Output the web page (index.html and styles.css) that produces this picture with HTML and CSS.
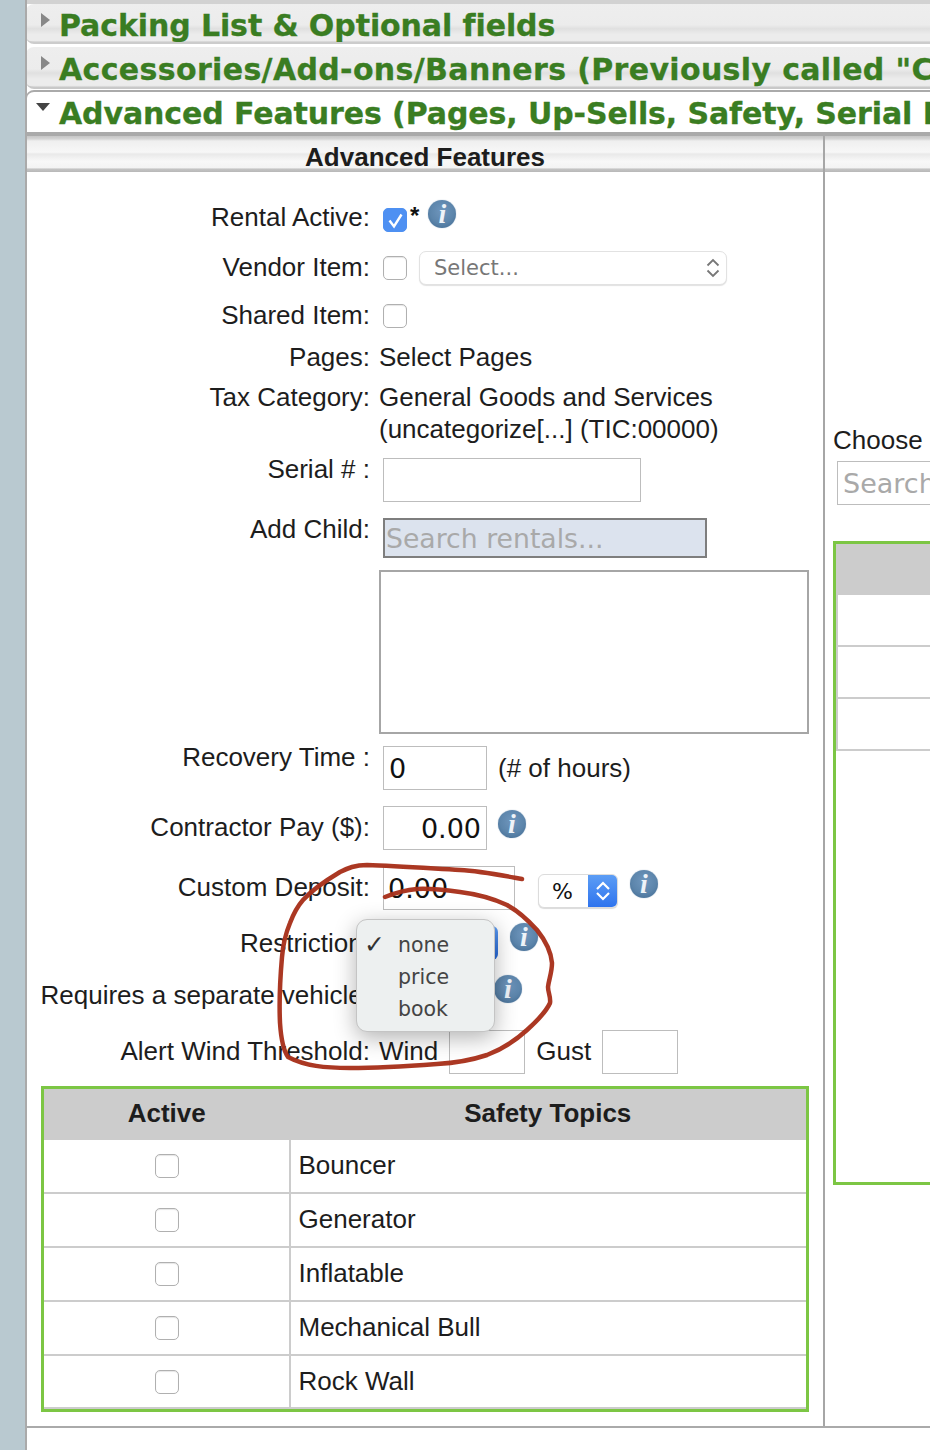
FILE: index.html
```html
<!DOCTYPE html>
<html lang="en">
<head>
<meta charset="utf-8">
<title>Advanced Features</title>
<link rel="stylesheet" href="styles.css">
</head>
<body>
<aside class="rail"></aside>
<main class="main">
  <div class="sliver"></div>
  <div class="acc closed"><span class="tri-r"></span><h3 class="acc-title">Packing List &amp; Optional fields</h3></div>
  <div class="acc closed second"><span class="tri-r"></span><h3 class="acc-title">Accessories/Add-ons/Banners (Previously called "Customizations")</h3></div>
  <div class="acc open"><span class="tri-d"></span><h3 class="acc-title">Advanced Features (Pages, Up-Sells, Safety, Serial Numbers)</h3></div>

  <div class="panel">
    <section class="col-left">
      <div class="subhead">Advanced Features</div>
      <div class="form">
        <div class="row h50"><label class="lab">Rental Active:</label><div class="val">
          <span class="cb checked m6"><svg viewBox="0 0 24 24" width="24" height="24"><path d="M6.500 12.500l4.500 6 7.500-12" fill="none" stroke="#fff" stroke-width="2.400"/></svg></span>
          <span class="star">*</span><span class="info info-rental">i</span></div></div>
        <div class="row h48"><label class="lab">Vendor Item:</label><div class="val">
          <span class="cb m4"></span>
          <div class="select-soft"><span>Select...</span><svg width="16" height="24" viewBox="0 0 16 24"><path d="M2.500 9.500L8 4l5.500 5.500M2.500 14.500L8 20l5.500-5.500" fill="none" stroke="#777" stroke-width="1.800"/></svg></div></div></div>
        <div class="row h42"><label class="lab">Shared Item:</label><div class="val"><span class="cb m4"></span></div></div>
        <div class="row h40"><label class="lab">Pages:</label><div class="val text">Select Pages</div></div>
        <div class="row h72"><label class="lab">Tax Category:</label><div class="val text tax">General Goods and Services<br>(uncategorize[...] (TIC:00000)</div></div>
        <div class="row h60"><label class="lab">Serial # :</label><div class="val"><span class="inp w258 m4"></span></div></div>
        <div class="row h228"><label class="lab">Add Child:</label><div class="val stack">
          <span class="search-blue">Search rentals...</span>
          <div class="listbox"></div></div></div>
        <div class="row h70"><label class="lab">Recovery Time :</label><div class="val"><span class="inp w104 m4 left">0</span><span class="hint">(# of hours)</span></div></div>
        <div class="row h60"><label class="lab">Contractor Pay ($):</label><div class="val"><span class="inp w104 up6 right">0.00</span><span class="info info-pay">i</span></div></div>
        <div class="row h56"><label class="lab">Custom Deposit:</label><div class="val"><span class="inp w132 up6 dep">0.00</span>
          <div class="select-blue"><span class="sb-text">%</span><span class="sb-btn"><svg width="18" height="26" viewBox="0 0 18 26"><path d="M3 11l6-6 6 6M3 15l6 6 6-6" fill="none" stroke="#fff" stroke-width="2.200"/></svg></span></div>
          <span class="info info-dep">i</span></div></div>
        <div class="row h52"><label class="lab">Restriction:</label><div class="val"><span class="hidden-select"></span><span class="info info-res">i</span></div></div>
        <div class="row h56"><label class="lab">Requires a separate vehicle:</label><div class="val"><span class="info info-veh">i</span></div></div>
        <div class="row h50"><label class="lab">Alert Wind Threshold:</label><div class="val"><span class="text">Wind</span><span class="inp w76 up6 wind"></span><span class="text gust">Gust</span><span class="inp w76 up6 gustbox"></span></div></div>

        <table class="topics">
          <thead><tr><th class="c-active">Active</th><th>Safety Topics</th></tr></thead>
          <tbody>
            <tr><td class="c-active"><span class="cb"></span></td><td>Bouncer</td></tr>
            <tr><td class="c-active"><span class="cb"></span></td><td>Generator</td></tr>
            <tr><td class="c-active"><span class="cb"></span></td><td>Inflatable</td></tr>
            <tr><td class="c-active"><span class="cb"></span></td><td>Mechanical Bull</td></tr>
            <tr><td class="c-active"><span class="cb"></span></td><td>Rock Wall</td></tr>
          </tbody>
        </table>
      </div>
    </section>
    <section class="col-right">
      <div class="subhead"></div>
      <div class="right-body">
        <div class="choose">Choose</div>
        <span class="inp right-search">Search</span>
        <div class="mini">
          <div class="mini-head"></div>
          <div class="mini-row"></div>
          <div class="mini-row"></div>
          <div class="mini-row"></div>
        </div>
      </div>
    </section>
  </div>
  <div class="foot"></div>
</main>

<div class="menu">
  <div class="opt"><span class="tick">✓</span>none</div>
  <div class="opt">price</div>
  <div class="opt">book</div>
</div>

<svg class="scribble" width="930" height="1450" viewBox="0 0 930 1450">
  <path d="M522 879C500 875 480 871 460 870C425 868 395 866 367 865C355 865 348 868 340 872C325 881 312 890 303 900C296 908 293 915 290 923C285 935 283 945 282 957C280 980 279 1002 280 1023C281 1038 283 1050 288 1057C305 1066 325 1068 350 1068C380 1068 410 1066 437 1064C455 1063 472 1060 487 1055C503 1049 516 1040 527 1030C537 1021 546 1012 550 1003C551 997 548 993 548 987C549 979 552 972 552 963C551 951 545 940 537 930C528 920 518 911 507 905C492 898 476 894 460 892C445 890 430 888 417 889C405 890 395 893 385 897" fill="none" stroke="#a8321c" stroke-width="4.500" stroke-linecap="round" stroke-linejoin="round" opacity=".97"/>
</svg>
</body>
</html>
```
FILE: styles.css
```css
* { box-sizing: border-box; }
html, body { margin: 0; height: 1450px; overflow: hidden; }
body { display: flex; position: relative; background: #fff; color: #1d1d1d; font-family: "Liberation Sans", Arial, sans-serif; font-size: 26px; }
.rail { flex: 0 0 27px; background: #b9c9d0; border-right: 2px solid #aaa; }
.main { flex: 1; min-width: 0; overflow: hidden; }

.sliver { height: 4px; background: #d2d2d2; }
.acc { position: relative; height: 40px; white-space: nowrap; overflow: hidden; border-radius: 8px 0 0 8px; }
.closed { background: linear-gradient(#eee 0, #ececec 55%, #e0e0e0 65%, #ececec 80%, #ececec 96%, #d0d0d0 100%); border-bottom: 2px solid #ccc; margin-left: -1px; }
.second { margin-top: 3px; height: 42px; border-bottom: 2px solid #c8c8c8; }
.open { margin-top: 1px; height: 42px; background: #fff; border-top: 2px solid #aaa; border-left: 1px solid #aaa; margin-left: -1px; border-radius: 8px 0 0 0; }
.acc-title { position: absolute; left: 33px; top: 3px; margin: 0; font: bold 30px/38px "DejaVu Sans", Verdana, sans-serif; color: #3a7d22; letter-spacing: -0.1px; -webkit-text-stroke: 0.3px #3a7d22; }
.second .acc-title { top: 4px; letter-spacing: 0.35px; }
.open .acc-title { top: 3px; left: 32px; }
.tri-r { position: absolute; left: 15px; top: 9px; border-left: 9px solid #888; border-top: 7px solid transparent; border-bottom: 7px solid transparent; }
.tri-d { position: absolute; left: 9px; top: 11px; border-top: 8px solid #444; border-left: 7px solid transparent; border-right: 7px solid transparent; }

.panel { display: flex; height: 1294px; border-top: 4px solid #aaa; margin-top: 0; }
.col-left { flex: 0 0 798px; border-right: 2px solid #a6a6a6; }
.col-right { flex: 1; min-width: 0; overflow: hidden; }
.subhead { height: 36px; text-align: center; font-weight: bold; font-size: 26px; line-height: 42px;
  background: linear-gradient(#c6c6c6 0, #d4d4d4 8%, #efefef 14%, #f7f7f7 45%, #e9e9e9 50%, #f8f8f8 70%, #f4f4f4 88%, #c4c4c4 92%, #b8b8b8 100%); }
.foot { height: 2px; background: #aaa; }

.form { padding-top: 30px; }
.row { display: flex; align-items: flex-start; }
.lab { flex: 0 0 343px; line-height: 30px; white-space: nowrap; display: flex; justify-content: flex-end; }
.val { margin-left: 9px; display: flex; align-items: flex-start; line-height: 30px; flex: 1; }
.text { line-height: 30px; }
.tax { display: block; line-height: 32px; margin-top: -1px; white-space: nowrap; }
.stack { flex-direction: column; }
.h40 { height: 40px; } .h42 { height: 42px; } .h48 { height: 48px; } .h50 { height: 50px; } .h52 { height: 52px; }
.h56 { height: 56px; } .h60 { height: 60px; } .h70 { height: 70px; } .h72 { height: 72px; } .h228 { height: 228px; }

.cb { display: inline-block; width: 24px; height: 24px; border: 1px solid #b0b0b0; border-radius: 5px; background: #fff; box-shadow: inset 0 1px 1px rgba(0,0,0,.1); flex: none; margin-left: 4px; }
.cb svg { display: block; margin: -1px; }
.checked { background: #4e90f2; border-color: #4e90f2; box-shadow: none; }
.m4 { margin-top: 4px; } .m6 { margin-top: 6px; }
.up6 { margin-top: -6px; }
.star { font-size: 24px; font-weight: bold; margin-left: 3px; line-height: 24px; margin-top: 2px; color: #111; }

.info { position: relative; flex: none; width: 28px; height: 28px; border-radius: 50%; text-align: center;
  background: radial-gradient(circle at 50% 40%, #6f96bd 0, #5c85ab 55%, #4b749b 80%, #8ba5bd 100%);
  box-shadow: 0 0 1px rgba(75,116,155,.7);
  color: #eef3f8; font: italic bold 28px/28px "Liberation Serif", serif; }
.info-rental { margin-left: 9px; margin-top: -2px; }
.info-pay { margin-left: 11px; margin-top: -2px; }
.info-dep { margin-left: 12px; margin-top: -2px; }
.info-res { margin-left: 12px; margin-top: -5px; }
.info-veh { margin-left: 115px; margin-top: -5px; }

.select-soft { margin-left: 12px; margin-top: -1px; width: 308px; height: 34px; display: flex; align-items: center; justify-content: space-between; padding: 0 5px 0 14px; background: #fff; border: 1px solid #e2e2e2; border-radius: 7px; box-shadow: 0 1px 1px rgba(0,0,0,.12); color: #777; font: 21px "DejaVu Sans", sans-serif; }

.inp { display: block; flex: none; height: 44px; border: 1px solid #bdbdbd; background: #fff; margin-left: 4px; font: 27px/44px "DejaVu Sans", sans-serif; color: #111; padding: 0 5px; }
.w258 { width: 258px; } .w104 { width: 104px; } .w132 { width: 132px; } .w76 { width: 76px; }
.left { text-align: left; } .right { text-align: right; }
.hint { margin-left: 11px; margin-top: 11px; }
.dep { padding-left: 4px; }
.select-blue { display: flex; margin-left: 23px; margin-top: 2px; width: 80px; height: 34px; border: 1px solid #dcdcdc; border-radius: 6px; overflow: hidden; background: #fff; box-shadow: 0 1px 1px rgba(0,0,0,.15); flex: none; }
.sb-text { flex: 1; text-align: center; color: #111; font: 22px/34px "DejaVu Sans", sans-serif; padding-right: 2px; }
.sb-btn { flex: 0 0 29px; display: flex; align-items: center; justify-content: center; background: linear-gradient(#5c9df5, #2f74ee); }
.hidden-select { flex: none; width: 119px; height: 34px; margin-top: -2px; background: linear-gradient(#5c9df5, #2568d8); border-radius: 6px; }
.wind { margin-left: 11px; }
.gust { margin-left: 11px; }
.gustbox { margin-left: 11px; }

.search-blue { display: block; width: 324px; height: 40px; margin: 4px 0 0 4px; border: 2px solid #7e7e7e; background: #dce3ee; color: #a9a9a9; font: 26.700px/38px "DejaVu Sans", sans-serif; padding-left: 1px; }
.listbox { width: 430px; height: 164px; margin: 12px 0 0 0; border: 2px solid #a6a6a6; background: #fff; }

.topics { width: 768px; margin-left: 14px; border-collapse: collapse; border: 3px solid #7cc644; table-layout: fixed; background: #fff; }
.topics th { height: 51px; background: #ccc; font-size: 26px; text-align: center; padding: 0; }
.topics td { height: 54px; border: 2px solid #ccc; padding: 0 0 2px 8px; line-height: 30px; }
.topics td:first-child { border-left: 0; }
.topics td:last-child { border-right: 0; }
.topics tr:last-child td { height: 56px; box-shadow: inset 0 -2px 0 #ccc; }
.topics td.c-active { padding: 0 0 3px 1px; }
.topics tr:last-child td.c-active { padding-bottom: 5px; }
.topics .c-active { width: 247px; text-align: center; }
.topics .cb { margin: 0; vertical-align: middle; }

.right-body { padding: 252px 0 0 8px; width: 500px; }
.choose { line-height: 32px; }
.right-search { width: 300px; margin: 5px 0 0 4px; color: #a9a9a9; }
.mini { margin-top: 36px; width: 500px; height: 644px; border: 3px solid #7cc644; border-right: 0; }
.mini-head { height: 51px; background: #ccc; }
.mini-row { height: 52px; border-bottom: 2px solid #ccc; border-left: 2px solid #ccc; }

.menu { position: absolute; left: 356px; top: 919px; width: 139px; height: 113px; padding: 9px 0 0 41px; border: 1px solid #c4c4c4; border-radius: 11px; background: #edf0f0; box-shadow: 0 6px 22px rgba(0,0,0,.3); color: #444; font: 20.500px/32px "DejaVu Sans", sans-serif; }
.opt { position: relative; }
.tick { position: absolute; left: -34px; top: 0; color: #333; font-size: 25px; font-weight: bold; }
.scribble { position: absolute; left: 0; top: 0; pointer-events: none; }
```
